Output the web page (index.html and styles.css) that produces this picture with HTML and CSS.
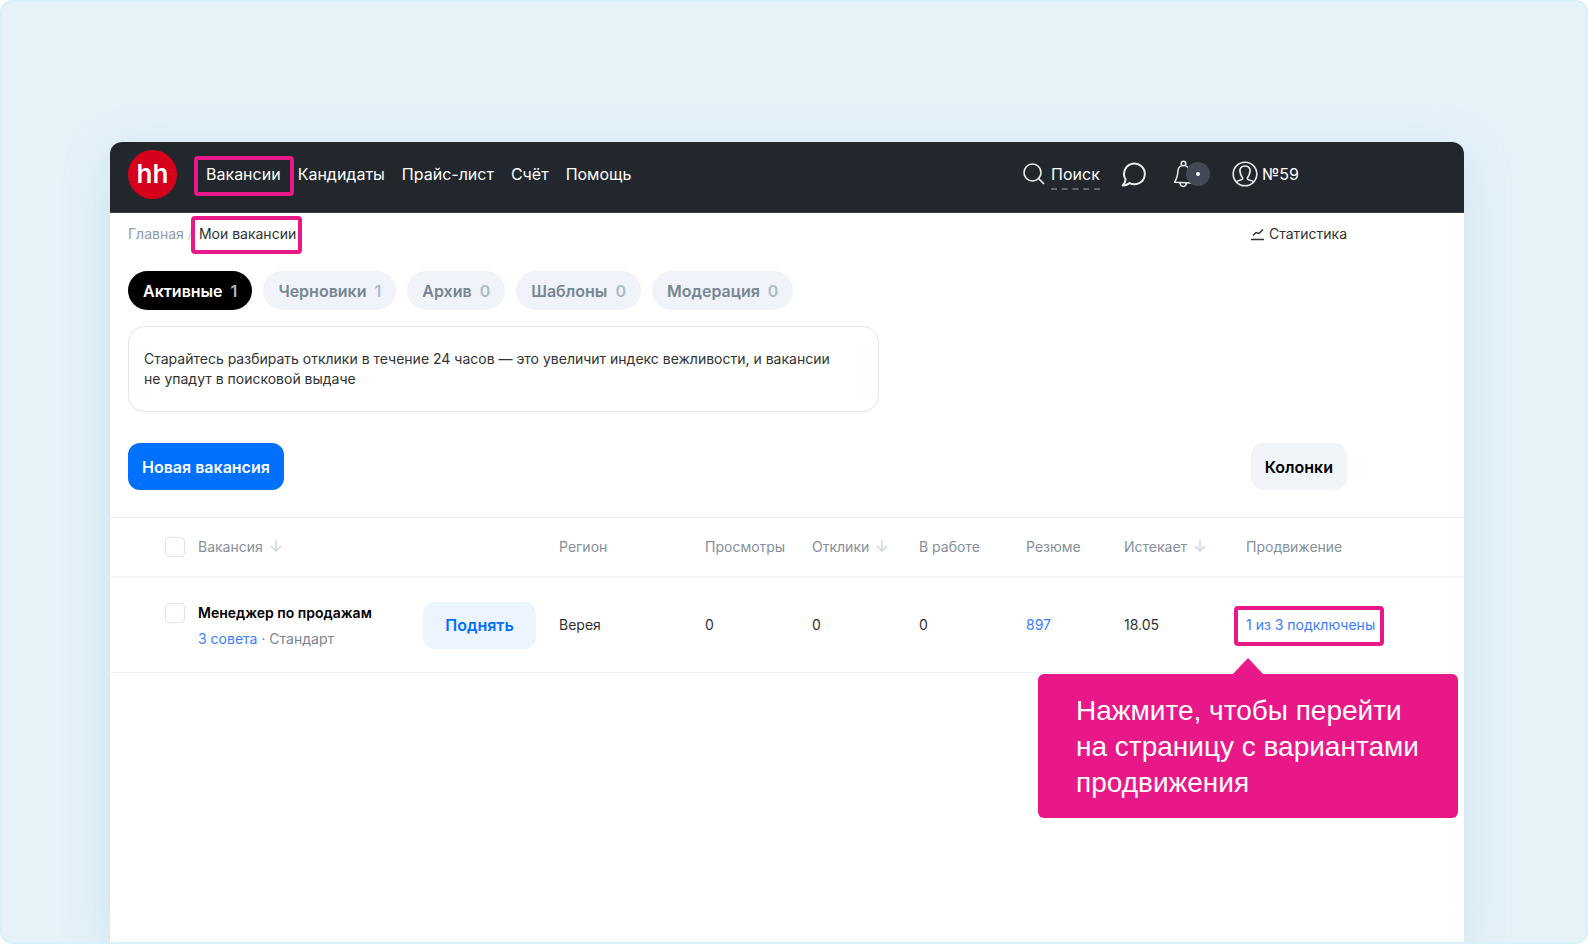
FILE: index.html
```html
<!DOCTYPE html>
<html lang="ru">
<head>
<meta charset="utf-8">
<title>Мои вакансии</title>
<link rel="stylesheet" href="styles.css">
</head>
<body>
<div class="stage">
  <div class="window">
    <header class="topbar">
      <a class="logo" href="#" aria-label="hh">hh</a>
      <nav class="nav">
        <a class="mark mark-nav" href="#">Вакансии</a>
        <a href="#">Кандидаты</a>
        <a href="#">Прайс-лист</a>
        <a href="#">Счёт</a>
        <a href="#">Помощь</a>
      </nav>
      <div class="tools">
        <a class="search" href="#">
          <svg width="22" height="22" viewBox="0 0 22 22"><circle cx="9.500" cy="9.500" r="8.500"/><path d="M15.500 15.500L21 21"/></svg>
          <span>Поиск</span>
        </a>
        <button class="icon-button" type="button" aria-label="Чат">
          <svg width="26" height="26" viewBox="0 0 26 26"><path d="M4.600 18.400A10.400 10.400 0 1 1 8.600 22.100Q5.400 24.600 1.600 24.400Q4.400 22 4.600 18.400Z"/></svg>
        </button>
        <button class="icon-button bell" type="button" aria-label="Уведомления">
          <svg width="20" height="28" viewBox="0 0 20 28"><circle cx="10.500" cy="3.500" r="2.300"/><path d="M9.200 5.500C5 6.500 5 10 4.600 14C4.200 18 3 19.500 1.500 22.300L19 23M12 5.500C16 6.500 16.500 10 16.800 14"/><path d="M7 23C7.500 27.500 13 27.500 13.500 23"/></svg>
          <span class="badge"></span>
        </button>
        <a class="user" href="#">
          <svg width="26" height="26" viewBox="0 0 26 26"><circle cx="13" cy="13" r="11.800"/><path d="M4.700 20.500C6.500 18.900 10.400 19.300 10.700 17.600C10.900 16.400 9.700 15.700 9 14.100C8 11.800 7.400 9.400 8.300 7.600C9.300 5.500 11 5 13 5S16.700 5.500 17.700 7.600C18.600 9.400 18 11.800 17 14.100C16.300 15.700 15.100 16.400 15.300 17.600C15.600 19.300 19.500 18.900 21.300 20.500"/></svg>
          <span>№59</span>
        </a>
      </div>
    </header>

    <main>
      <div class="crumbs">
        <nav class="trail"><a class="home" href="#">Главная</a><span class="slash">/</span><a class="mark mark-crumb" href="#">Мои вакансии</a></nav>
        <a class="stats" href="#">
          <svg width="14" height="14" viewBox="0 0 14 14"><path d="M0 12.500H13M2 8.500L5 5.500L8 6.500L12 2.500"/></svg>Статистика
        </a>
      </div>

      <div class="tabs">
        <button class="tab active" type="button">Активные <span>1</span></button>
        <button class="tab" type="button">Черновики <span>1</span></button>
        <button class="tab" type="button">Архив <span>0</span></button>
        <button class="tab" type="button">Шаблоны <span>0</span></button>
        <button class="tab" type="button">Модерация <span>0</span></button>
      </div>

      <p class="notice">Старайтесь разбирать отклики в течение 24 часов — это увеличит индекс вежливости, и вакансии<br>не&nbsp;упадут в поисковой выдаче</p>

      <div class="actions">
        <button class="button primary" type="button">Новая вакансия</button>
        <button class="button" type="button">Колонки</button>
      </div>

      <table class="vacancies">
        <colgroup><col class="c-check"><col class="c-name"><col class="c-raise"><col class="c-region"><col class="c-count"><col class="c-count"><col class="c-count"><col class="c-resume"><col class="c-expires"><col></colgroup>
        <thead>
          <tr>
            <th class="check"><input type="checkbox" aria-label="Выбрать все"></th>
            <th colspan="2">Вакансия<svg class="sort" width="12" height="12" viewBox="0 0 12 12"><path d="M6 0V11M1 6L6 11L11 6"/></svg></th>
            <th>Регион</th>
            <th>Просмотры</th>
            <th>Отклики<svg class="sort" width="12" height="12" viewBox="0 0 12 12"><path d="M6 0V11M1 6L6 11L11 6"/></svg></th>
            <th>В работе</th>
            <th>Резюме</th>
            <th>Истекает<svg class="sort" width="12" height="12" viewBox="0 0 12 12"><path d="M6 0V11M1 6L6 11L11 6"/></svg></th>
            <th>Продвижение</th>
          </tr>
        </thead>
        <tbody>
          <tr>
            <td class="check top"><input type="checkbox" aria-label="Менеджер по продажам"></td>
            <td class="top">
              <div class="name">Менеджер по продажам</div>
              <div class="sub"><a href="#">3 совета ·</a> Стандарт</div>
            </td>
            <td><button class="button raise" type="button">Поднять</button></td>
            <td>Верея</td>
            <td>0</td>
            <td>0</td>
            <td>0</td>
            <td><a href="#">897</a></td>
            <td>18.05</td>
            <td>
              <div class="promo">
                <a class="mark mark-promo" href="#">1 из 3 подключены</a>
                <div class="tip" role="tooltip">Нажмите, чтобы перейти<br>на страницу с вариантами<br>продвижения</div>
              </div>
            </td>
          </tr>
        </tbody>
      </table>
    </main>
  </div>
</div>
</body>
</html>
```
FILE: styles.css
```css
* { box-sizing: border-box; }

body {
  margin: 0;
  background: #fff;
  color: #303233;
  font: 14px/20px Inter, "Noto Sans", sans-serif;
}

a { color: inherit; text-decoration: none; }
button { border: 0; padding: 0; background: none; color: inherit; font: inherit; cursor: pointer; }
svg { flex: none; fill: none; stroke: currentColor; }

.stage {
  display: flex;
  min-height: 100vh;
  padding: 140px 122px 0 108px;
  border: 2px solid #d9f2f9;
  border-radius: 12px;
  background: #e6f2f8;
  overflow: hidden;
}

.window {
  flex: 1;
  min-width: 0;
  border-radius: 12px 12px 0 0;
  background: #fff;
  box-shadow: 0 12px 48px rgba(125, 180, 215, 0.25);
}

.mark { border: 4px solid #e91889; border-radius: 4px; }

.topbar {
  display: flex;
  align-items: center;
  height: 71px;
  padding: 0 165px 6px 18px;
  border-bottom: 1px solid #3b4046;
  border-radius: 12px 12px 0 0;
  background: #22262d;
  color: #fff;
  font-size: 16px;
}

.logo {
  display: grid;
  place-items: center;
  width: 49px;
  height: 49px;
  border-radius: 50%;
  background: #d6001c;
  font-size: 26px;
  font-weight: 600;
}

.nav { display: flex; align-items: center; gap: 17px; margin-left: 17px; }
.mark-nav { margin: 4px -13px 0 0; padding: 4px 9px 8px 8px; }

.tools { display: flex; align-items: center; margin-left: auto; }
.tools svg { display: block; stroke-width: 2; stroke-linejoin: round; color: #e8eaec; }
.tools .search svg { stroke-width: 1.700; }
.search { display: flex; align-items: center; gap: 6px; }
.search span { margin-top: 6px; padding-bottom: 4px; border-bottom: 2px dashed #62666c; }
.icon-button { display: flex; align-items: center; margin-left: 21px; }
.tools .bell { margin-left: 26px; }
.tools .bell svg { stroke-width: 1.500; }

.badge {
  display: grid;
  place-items: center;
  z-index: 1;
  width: 24px;
  height: 24px;
  margin-left: -7px;
  border-radius: 50%;
  background: #424a55;
}
.badge::before { content: ""; width: 4px; height: 4px; border-radius: 50%; background: #fff; }

.user { display: flex; align-items: center; gap: 4px; margin-left: 22px; }
.tools .user svg { stroke-width: 1.600; }

.crumbs { display: flex; justify-content: space-between; align-items: center; height: 44px; padding: 0 117px 0 18px; }
.trail { display: flex; align-items: center; color: #909da8; }
.home, .slash, .stats { padding-bottom: 2px; }
.slash { margin-left: 4px; color: #c9d1d9; }
.mark-crumb { margin-left: -2px; padding: 4px 2px 6px 4px; color: #303233; }
.stats { display: flex; align-items: center; gap: 4px; }
.stats svg { stroke-width: 1.500; }

.tabs { display: flex; gap: 11px; margin: 14px 18px 0; }
.tab {
  height: 39px;
  padding: 0 15px;
  border-radius: 20px;
  background: #f0f3f9;
  color: #768694;
  font-size: 16px;
  font-weight: 600;
}
.tab span { margin-left: 4px; color: #aabbca; }
.tab.active { background: #000; color: #fff; }

.notice {
  max-width: 751px;
  margin: 16px 18px 0;
  padding: 22px 15px;
  border: 1px solid #dfe6ee;
  border-radius: 16px;
}

.actions { display: flex; justify-content: space-between; margin: 31px 117px 27px 18px; }
.button {
  height: 47px;
  padding: 0 14px;
  border-radius: 12px;
  background: #f1f4f9;
  color: #000;
  font-size: 16px;
  font-weight: 600;
}
.button.primary { background: #0070ff; color: #fff; }
.button.raise { display: block; width: 113px; background: #ebf4ff; color: #0070ff; }

.vacancies { width: 100%; border-collapse: separate; border-spacing: 0; table-layout: fixed; }
.c-check { width: 88px; }
.c-name { width: 225px; }
.c-raise { width: 136px; }
.c-region { width: 146px; }
.c-count { width: 107px; }
.c-resume { width: 98px; }
.c-expires { width: 122px; }

.vacancies th, .vacancies td { padding: 0; text-align: left; }
.vacancies th {
  height: 61px;
  border-top: 1px solid #e9edf2;
  border-bottom: 2px solid #f5f6fc;
  color: #868f9a;
  font-weight: 400;
}
.vacancies td { height: 95px; border-bottom: 1px solid #edf0f6; vertical-align: middle; }
.vacancies td.top { padding-top: 25px; vertical-align: top; }
.vacancies a { color: #3b7cff; }
.vacancies .check { padding-left: 55px; }
.sort { margin-left: 7px; stroke: #ccd5df; stroke-width: 1.500; }

input[type="checkbox"] {
  appearance: none;
  display: block;
  width: 20px;
  height: 20px;
  margin: 0;
  border: 1px solid #dbe3ec;
  border-radius: 4px;
  background: #fff;
}

.name { color: #000; font-weight: 600; }
.sub { margin-top: 6px; color: #7b8591; }

.promo { position: relative; margin: 2px 0 0 -12px; }
.mark-promo { display: inline-block; padding: 5px 5px 7px 8px; vertical-align: top; }

.tip {
  position: absolute;
  top: calc(100% + 28px);
  left: -196px;
  padding: 19px 38px 17px;
  width: 420px;
  border-radius: 6px;
  background: #e91889;
  color: #fff;
  font: 28px/36px "Liberation Sans", Arial, sans-serif;
}
.tip::before {
  content: "";
  position: absolute;
  bottom: 100%;
  left: 195px;
  border: 15px solid transparent;
  border-top: 0;
  border-bottom: 16px solid #e91889;
}
```
